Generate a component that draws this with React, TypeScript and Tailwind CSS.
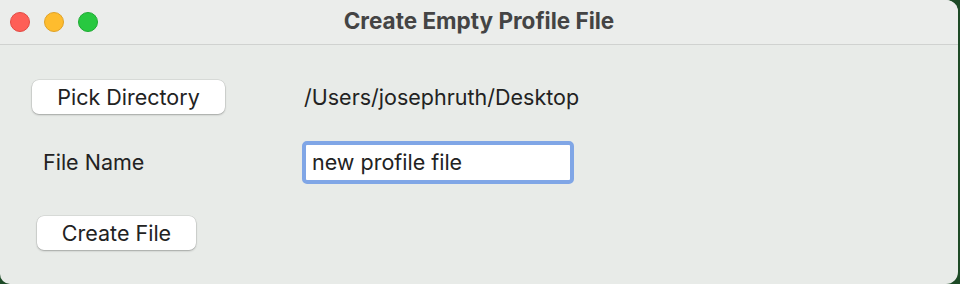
import { useState } from "react";

const font = { fontFamily: "Inter, 'Noto Sans', sans-serif" };

const MacButton = ({ label, className }: { label: string; className: string }) => (
	<button
		className={`h-[34px] rounded-[7px] bg-white text-[21.5px] text-[#222] shadow-[0_1px_2px_rgba(0,0,0,0.25),0_0_0_0.5px_rgba(0,0,0,0.12)] ${className}`}
	>
		{label}
	</button>
);

export default function App() {
	const [name, setName] = useState("new profile file");

	return (
		<div className="w-[960px] h-[284px] bg-[#1d4a26]" style={font}>
			<div className="flex flex-col w-[958px] h-[284px] rounded-tr-[12px] rounded-br-[12px] rounded-bl-[10px] overflow-hidden bg-[#e8ebe8]">
				<header className="relative flex items-center h-[45px] bg-[#ebedeb] border-b border-[#d0d2d0]">
					<div className="flex gap-[14px] pl-[10px]">
						<span className="w-[20px] h-[20px] rounded-full bg-[#fe5f57] border border-[#e24a43]" />
						<span className="w-[20px] h-[20px] rounded-full bg-[#febc2e] border border-[#e0a226]" />
						<span className="w-[20px] h-[20px] rounded-full bg-[#28c840] border border-[#1eab33]" />
					</div>
					<h1 className="absolute inset-x-0 -mt-[2px] text-center text-[22.5px] font-bold text-[#444] pointer-events-none">
						Create Empty Profile File
					</h1>
				</header>
				<main className="grid grid-cols-[302px_1fr] grid-rows-[68px_62px_80px] items-center pt-[18px]">
					<div className="pl-[32px]">
						<MacButton label="Pick Directory" className="w-[193px]" />
					</div>
					<div className="pl-[2px] text-[21.5px] text-[#222]">/Users/josephruth/Desktop</div>
					<div className="pl-[43px] text-[21.5px] text-[#222]">File Name</div>
					<div>
						<input
							value={name}
							onChange={(e) => setName(e.target.value)}
							className="w-[272px] h-[43px] rounded-[5px] bg-white border-[4px] border-[#80a6e6] px-[6px] text-[21.5px] text-[#222] outline-none"
						/>
					</div>
					<div className="pl-[37px]">
						<MacButton label="Create File" className="w-[159px]" />
					</div>
					<div />
				</main>
			</div>
		</div>
	);
}
